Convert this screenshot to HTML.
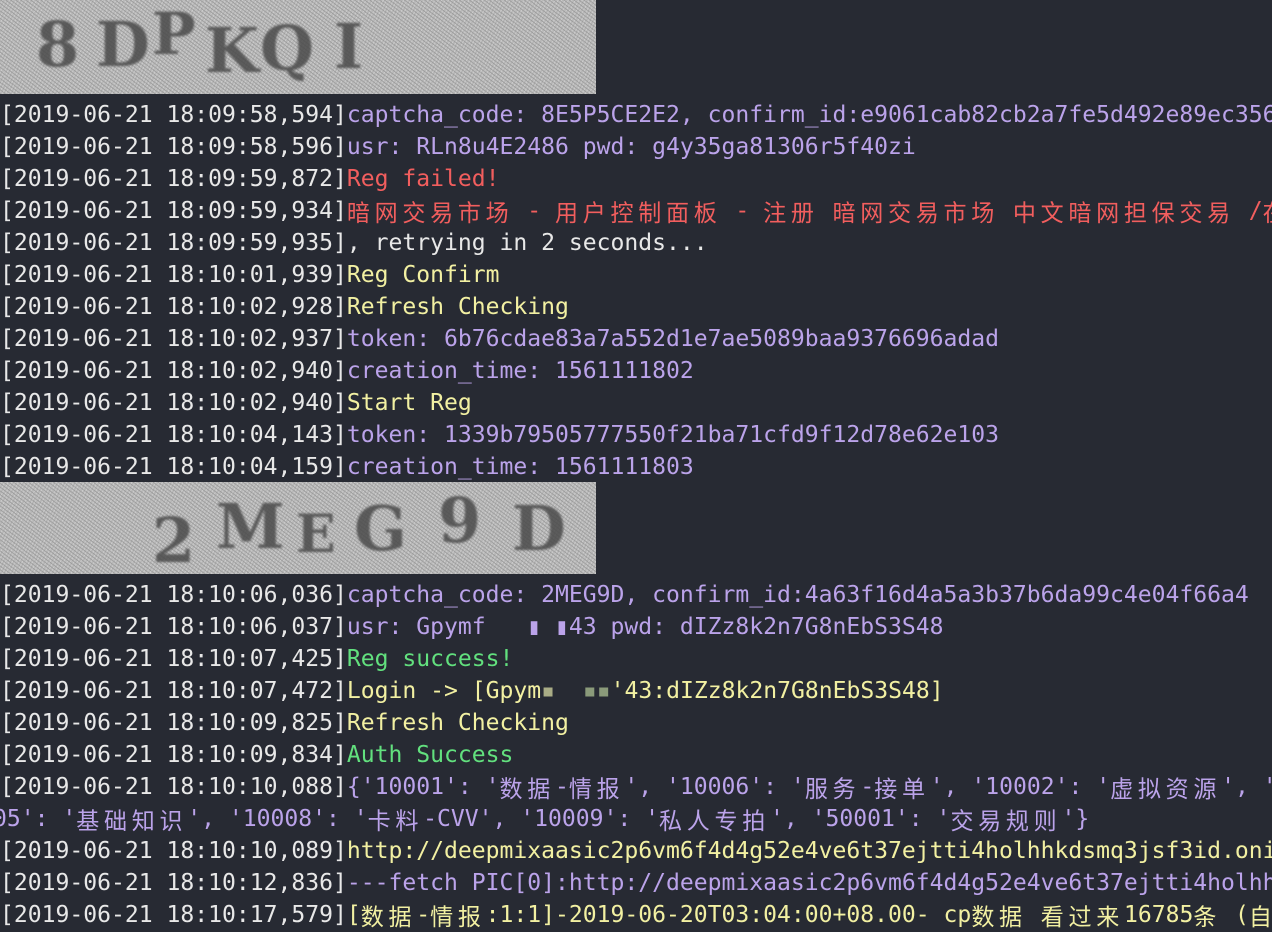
<!DOCTYPE html>
<html><head><meta charset="utf-8"><style>
html,body{margin:0;padding:0;background:#272a33;width:1272px;height:930px;overflow:hidden}
.l{position:absolute;left:0;height:32px;line-height:32px;white-space:pre;font-family:"DejaVu Sans Mono","Liberation Mono","Noto Sans CJK SC",monospace;font-size:23.05px;color:#e8e8e8;margin-top:2px}
.c{font-family:"Noto Sans CJK SC",sans-serif;font-weight:normal;letter-spacing:4.7px;line-height:0;display:inline-block;vertical-align:top;height:32px;line-height:32px}
.p{color:#bba3ea}.r{color:#f25e5e}.y{color:#f2f0a2}.g{color:#62e07e}
.cap{position:absolute;left:0;width:596px;background:#b8b8b8;background-image:repeating-linear-gradient(37deg,rgba(140,140,140,.6) 0 1px,transparent 1px 3px),repeating-linear-gradient(-61deg,rgba(215,215,215,.6) 0 1px,transparent 1px 3px);overflow:hidden}
.cap span{position:absolute;font-family:"DejaVu Serif","Liberation Serif",serif;font-weight:bold;color:#4a4a4a;font-size:62px;filter:blur(1px);opacity:.85}
</style></head><body>
<div class="cap" style="top:0;height:94px">
<span style="left:36px;top:8px">8</span><span style="left:96px;top:8px">D</span><span style="left:152px;top:0px;font-size:58px">P</span><span style="left:205px;top:14px">K</span><span style="left:260px;top:12px">Q</span><span style="left:334px;top:10px">I</span>
</div>
<div class="cap" style="top:482px;height:92px">
<span style="left:152px;top:22px">2</span><span style="left:216px;top:8px">M</span><span style="left:296px;top:22px;font-size:52px">E</span><span style="left:354px;top:10px">G</span><span style="left:438px;top:2px">9</span><span style="left:512px;top:10px">D</span>
</div>
<div class="l" style="top:97px">[2019-06-21 18:09:58,594]<span class="p">captcha_code: 8E5P5CE2E2, confirm_id:e9061cab82cb2a7fe5d492e89ec356</span></div>
<div class="l" style="top:129px">[2019-06-21 18:09:58,596]<span class="p">usr: RLn8u4E2486 pwd: g4y35ga81306r5f40zi</span></div>
<div class="l" style="top:161px">[2019-06-21 18:09:59,872]<span class="r">Reg failed!</span></div>
<div class="l" style="top:193px">[2019-06-21 18:09:59,934]<span class="r"><b class="c">暗网交易市场</b> - <b class="c">用户控制面板</b> - <b class="c">注册</b> <b class="c">暗网交易市场</b> <b class="c">中文暗网担保交易</b> /<b class="c">在</b></span></div>
<div class="l" style="top:225px">[2019-06-21 18:09:59,935], retrying in 2 seconds...</div>
<div class="l" style="top:257px">[2019-06-21 18:10:01,939]<span class="y">Reg Confirm</span></div>
<div class="l" style="top:289px">[2019-06-21 18:10:02,928]<span class="y">Refresh Checking</span></div>
<div class="l" style="top:321px">[2019-06-21 18:10:02,937]<span class="p">token: 6b76cdae83a7a552d1e7ae5089baa9376696adad</span></div>
<div class="l" style="top:353px">[2019-06-21 18:10:02,940]<span class="p">creation_time: 1561111802</span></div>
<div class="l" style="top:385px">[2019-06-21 18:10:02,940]<span class="y">Start Reg</span></div>
<div class="l" style="top:417px">[2019-06-21 18:10:04,143]<span class="p">token: 1339b79505777550f21ba71cfd9f12d78e62e103</span></div>
<div class="l" style="top:449px">[2019-06-21 18:10:04,159]<span class="p">creation_time: 1561111803</span></div>
<div class="l" style="top:577px">[2019-06-21 18:10:06,036]<span class="p">captcha_code: 2MEG9D, confirm_id:4a63f16d4a5a3b37b6da99c4e04f66a4</span></div>
<div class="l" style="top:609px">[2019-06-21 18:10:06,037]<span class="p">usr: Gpymf   ▮ ▮43 pwd: dIZz8k2n7G8nEbS3S48</span></div>
<div class="l" style="top:641px">[2019-06-21 18:10:07,425]<span class="g">Reg success!</span></div>
<div class="l" style="top:673px">[2019-06-21 18:10:07,472]<span class="y">Login -&gt; [Gpym<span style="color:#a9ac86">▪</span>  <span style="color:#8a9a7a">▪▪</span>'43:dIZz8k2n7G8nEbS3S48]</span></div>
<div class="l" style="top:705px">[2019-06-21 18:10:09,825]<span class="y">Refresh Checking</span></div>
<div class="l" style="top:737px">[2019-06-21 18:10:09,834]<span class="g">Auth Success</span></div>
<div class="l" style="top:769px">[2019-06-21 18:10:10,088]<span class="p">{'10001': '<b class="c">数据</b>-<b class="c">情报</b>', '10006': '<b class="c">服务</b>-<b class="c">接单</b>', '10002': '<b class="c">虚拟资源</b>', '</span></div>
<div class="l" style="top:801px;left:-7px"><span class="p">05': '<b class="c">基础知识</b>', '10008': '<b class="c">卡料</b>-CVV', '10009': '<b class="c">私人专拍</b>', '50001': '<b class="c">交易规则</b>'}</span></div>
<div class="l" style="top:833px">[2019-06-21 18:10:10,089]<span class="y">http://deepmixaasic2p6vm6f4d4g52e4ve6t37ejtti4holhhkdsmq3jsf3id.onio</span></div>
<div class="l" style="top:865px">[2019-06-21 18:10:12,836]<span class="p">---fetch PIC[0]:http://deepmixaasic2p6vm6f4d4g52e4ve6t37ejtti4holhhk</span></div>
<div class="l" style="top:897px">[2019-06-21 18:10:17,579]<span class="y">[<b class="c">数据</b>-<b class="c">情报</b>:1:1]-2019-06-20T03:04:00+08.00- cp<b class="c">数据</b> <b class="c">看过来</b>16785<b class="c">条</b> (<b class="c">自</b></span></div>
</body></html>
